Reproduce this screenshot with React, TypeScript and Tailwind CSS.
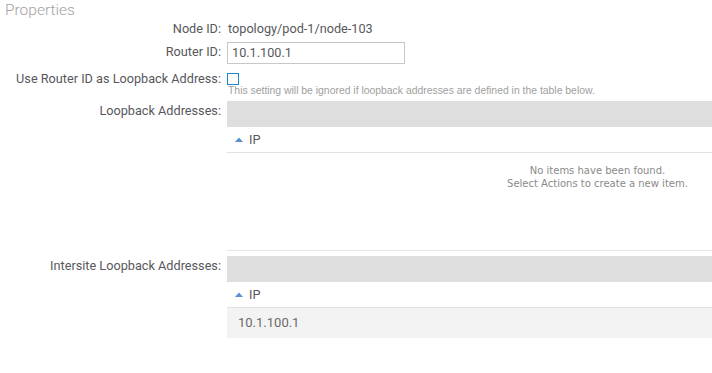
export default function App() {
  const font = { fontFamily: "Roboto, 'Liberation Sans', Arial, sans-serif" };
  const SortUp = () => (
    <svg width="8" height="5" viewBox="0 0 8 5" className="shrink-0">
      <path d="M0 5 L4 0.5 L8 5 Z" fill="#5b8fd0" />
    </svg>
  );
  return (
    <div style={font} className="w-[712px] h-[373px] bg-white overflow-hidden text-[#58585b]">
      <h2 className="pl-[5px] pt-px text-[15.5px] leading-[18px] font-light text-[#a3a3a3]">Properties</h2>

      <div className="grid grid-cols-[221px_1fr] gap-x-[6px] text-[12.7px]">
        {/* Node ID */}
        <div className="text-right pt-[2px] leading-[16px]">Node ID:</div>
        <div className="pt-[2px] leading-[16px] pl-px">topology/pod-1/node-103</div>

        {/* Router ID */}
        <div className="text-right pt-[7px] leading-[16px]">Router ID:</div>
        <div className="pt-[5px]">
          <div className="w-[178px] h-[22px] border border-[#c8c8c8] px-[4px] leading-[20px]">10.1.100.1</div>
        </div>

        {/* Use router ID */}
        <div className="text-right pt-[7px] leading-[16px]">Use Router ID as Loopback Address:</div>
        <div className="pt-[9px]">
          <div className="w-[12px] h-[12px] border border-[#1b86c8] bg-white"></div>
          <div className="text-[10.4px] leading-[12px] text-[#a0a0a0] pl-px" style={{ fontFamily: "'Liberation Sans', Arial, sans-serif" }}>This setting will be ignored if loopback addresses are defined in the table below.</div>
        </div>

        {/* Loopback */}
        <div className="text-right pt-[6px] leading-[16px]">Loopback Addresses:</div>
        <div className="pt-[4px]">
          <div className="h-[26px] bg-[#dedede]"></div>
          <div className="h-[26px] border-b border-[#e2e2e2] flex items-center gap-[6px] pl-[8px]">
            <SortUp />
            <span className="leading-[16px]">IP</span>
          </div>
          <div className="h-[98px] border-b border-[#e6e6e6] pl-[256px] pt-[11px] text-center text-[10px] leading-[13px] text-[#8a8a8a]" style={{ fontFamily: "'DejaVu Sans', Tahoma, sans-serif" }}>
            <div>No items have been found.</div>
            <div>Select Actions to create a new item.</div>
          </div>
        </div>

        {/* Intersite */}
        <div className="text-right pt-[7px] leading-[16px]">Intersite Loopback Addresses:</div>
        <div className="pt-[5px]">
          <div className="h-[26px] bg-[#dedede]"></div>
          <div className="h-[26px] border-b border-[#e2e2e2] flex items-center gap-[6px] pl-[8px]">
            <SortUp />
            <span className="leading-[16px]">IP</span>
          </div>
          <div className="h-[30px] bg-[#f3f3f3] flex items-center pl-[11px] text-[13px] text-[#6a6a6a]">10.1.100.1</div>
        </div>
      </div>
    </div>
  );
}
